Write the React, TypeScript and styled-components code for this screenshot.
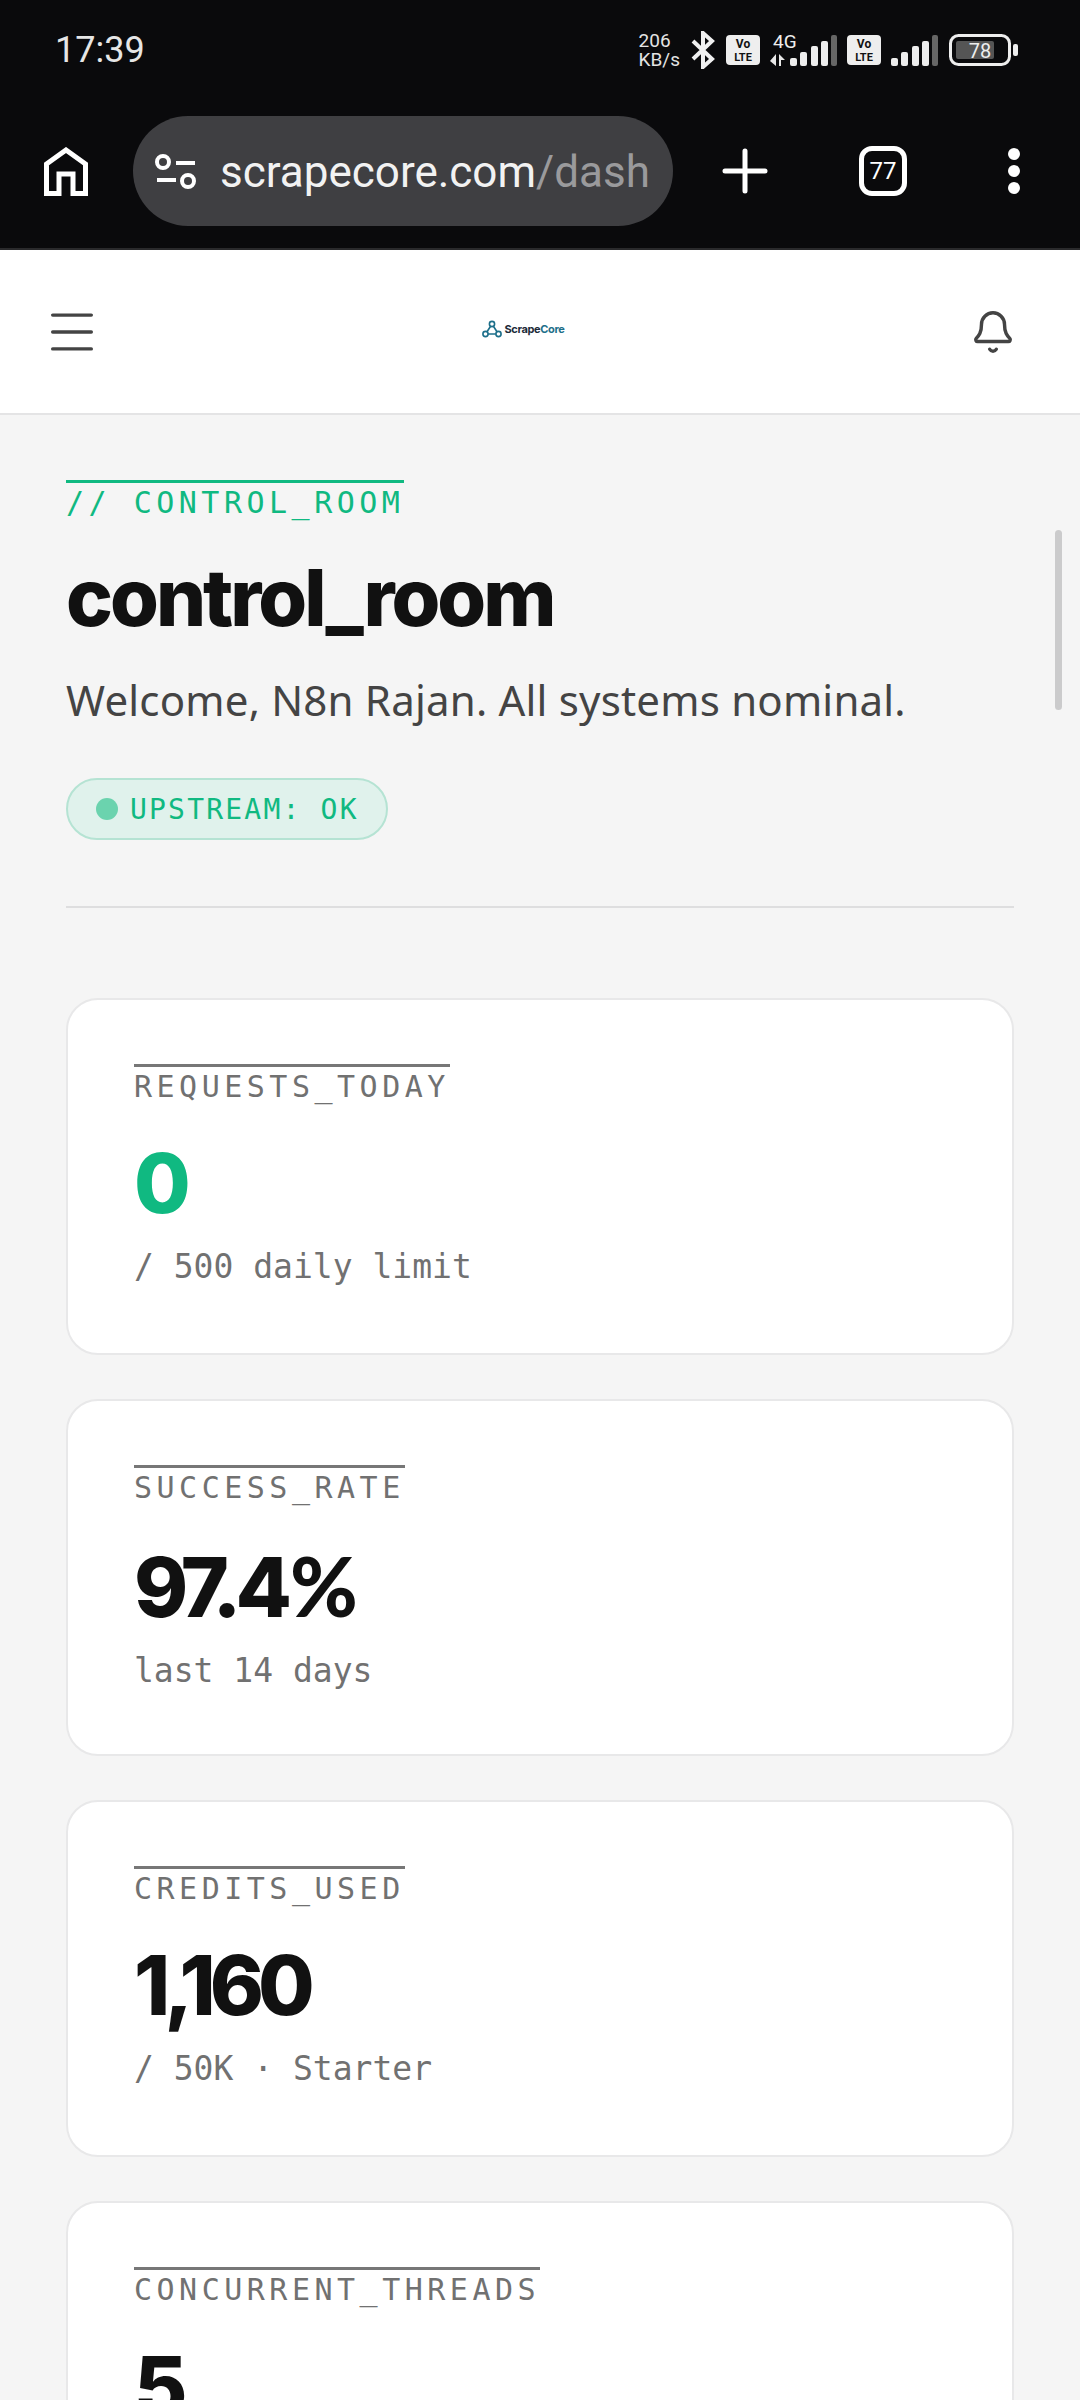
import React from "react"
import styled, { createGlobalStyle } from "styled-components"
import { Bell, Menu } from "lucide-react"

const mono = `"DejaVu Sans Mono", "Liberation Mono", monospace`
const display = `Inter, "Noto Sans", sans-serif`
const body = `"Noto Sans", Roboto, sans-serif`
const ui = `Roboto, "Noto Sans", sans-serif`

const GlobalStyle = createGlobalStyle`
    html, body {
        margin: 0;
        padding: 0;
        height: 2400px;
        overflow: hidden;
        background: #f5f5f5;
    }
    * {
        box-sizing: border-box;
    }
`

const Page = styled.div`
    position: relative;
    width: 1080px;
    height: 2400px;
    overflow: hidden;
    background: #f5f5f5;
`

const Chrome = styled.div`
    height: 250px;
    background: #0a0a0c;
    border-bottom: 2px solid #2a2a2c;
    padding: 0 40px;
    display: flex;
    flex-direction: column;
`

const StatusBar = styled.div`
    height: 100px;
    display: flex;
    align-items: center;
    justify-content: space-between;
    color: #eee;
    font-family: ${ui};
`

const Clock = styled.div`
    font-size: 36px;
    margin-left: 15px;
    color: #e6e6e6;
`

const StatusIcons = styled.div`
    display: flex;
    align-items: center;
    gap: 10px;
    margin-right: 21px;
`

const Speed = styled.div`
    font-size: 19px;
    line-height: 19px;
    text-align: left;
    color: #e4e4e4;
`

const UrlRow = styled.div`
    height: 110px;
    margin-top: 16px;
    padding-left: 4px;
    display: flex;
    align-items: center;
`

const UrlBar = styled.div`
    width: 540px;
    height: 110px;
    margin-left: 45px;
    border-radius: 55px;
    background: #3f3f42;
    display: flex;
    align-items: center;
    padding-left: 22px;
    gap: 23px;
    font-family: ${ui};
    font-size: 44px;
    color: #f2f2f2;
    white-space: nowrap;
    span {
        color: #9a9a9c;
    }
`

const UrlText = styled.div`
    margin-top: 2px;
`

const ChromeActions = styled.div`
    display: flex;
    align-items: center;
    margin-left: 49px;
    gap: 91px;
`

const TabCount = styled.div`
    width: 48px;
    height: 50px;
    border: 5px solid #fff;
    border-radius: 13px;
    color: #fff;
    font-family: ${ui};
    font-size: 24px;
    display: flex;
    align-items: center;
    justify-content: center;
`

const Header = styled.header`
    height: 165px;
    background: #fff;
    border-bottom: 2px solid #e4e4e5;
    padding: 0 64px 0 43px;
    display: flex;
    align-items: center;
    justify-content: space-between;
    color: #444;
`

const Logo = styled.div`
    display: flex;
    align-items: center;
    gap: 2px;
    margin: -6px 0 0 -24px;
    font-family: ${display};
    font-weight: 700;
    font-size: 11px;
    letter-spacing: -0.35px;
    color: #1c2b39;
    span {
        color: #1d6f8a;
    }
`

const Content = styled.main`
    padding: 65px 66px 0;
`

const Eyebrow = styled.div`
    display: inline-block;
    border-top: 3px solid #10b981;
    font-family: ${mono};
    font-size: 30px;
    line-height: 40px;
    letter-spacing: 4.5px;
    color: #10b981;
    white-space: nowrap;
`

const Title = styled.h1`
    margin: 26px 0 0;
    font-family: ${display};
    font-weight: 800;
    font-size: 79px;
    line-height: 96px;
    letter-spacing: -3px;
    color: #111;
`

const Welcome = styled.p`
    margin: 29px 0 0;
    font-family: ${body};
    font-size: 42px;
    line-height: 52px;
    letter-spacing: 0.2px;
    color: #444;
`

const Pill = styled.div`
    width: 322px;
    height: 62px;
    margin-top: 52px;
    border: 2px solid #b5e3d3;
    border-radius: 31px;
    background: #e0f2ec;
    padding-left: 28px;
    display: flex;
    align-items: center;
    gap: 12px;
    font-family: ${mono};
    font-size: 28px;
    letter-spacing: 2.2px;
    color: #10b981;
    white-space: nowrap;
`

const Dot = styled.i`
    width: 22px;
    height: 22px;
    border-radius: 50%;
    background: #6bd3ae;
`

const Divider = styled.hr`
    margin: 66px 0 0;
    border: 0;
    height: 2px;
    background: #dededf;
`

const Cards = styled.div`
    margin-top: 90px;
    display: flex;
    flex-direction: column;
    gap: 44px;
`

const Card = styled.section`
    height: 357px;
    background: #fff;
    border: 2px solid #e8e8e9;
    border-radius: 32px;
    padding: 64px 66px 0;
`

const Label = styled.div`
    display: inline-block;
    border-top: 3px solid #777;
    font-family: ${mono};
    font-size: 30px;
    line-height: 40px;
    letter-spacing: 4.5px;
    color: #717171;
    white-space: nowrap;
`

const Value = styled.div<{ $accent?: boolean }>`
    margin-top: 29px;
    font-family: ${display};
    font-weight: 800;
    font-size: 82px;
    line-height: 96px;
    letter-spacing: -6px;
    color: ${(p) => (p.$accent ? "#10b981" : "#111")};
`

const Unit = styled.span`
    margin-left: 4px;
    font-family: Lato, sans-serif;
    font-weight: 900;
    letter-spacing: 0;
`

const Sub = styled.div`
    margin-top: 13px;
    font-family: ${mono};
    font-size: 33px;
    line-height: 44px;
    color: #717171;
    white-space: nowrap;
`

const ScrollThumb = styled.div`
    position: absolute;
    left: 1055px;
    top: 530px;
    width: 7px;
    height: 180px;
    border-radius: 4px;
    background: #cbcbcc;
`

const HomeIcon = () => (
    <svg width="44" height="49" viewBox="0 0 44 49" fill="none" stroke="#fff" strokeWidth="5">
        <path d="M2.5 46.5V17L22 3l19.5 14v29.500H29V27H15v19.500z" />
    </svg>
)

const SiteControls = () => (
    <svg width="42" height="35" viewBox="0 0 42 35" fill="none" stroke="#fff" strokeWidth="4">
        <circle cx="8" cy="8" r="6" />
        <path d="M21 9h19M2 26h19" />
        <circle cx="33" cy="27" r="6" />
    </svg>
)

const PlusIcon = () => (
    <svg width="46" height="46" viewBox="0 0 46 46" stroke="#fff" strokeWidth="5" strokeLinecap="round">
        <path d="M23 3v40M3 23h40" />
    </svg>
)

const MoreIcon = () => (
    <svg width="32" height="46" viewBox="-9 0 32 46" fill="#fff">
        <circle cx="7" cy="6" r="6" />
        <circle cx="7" cy="23" r="6" />
        <circle cx="7" cy="40" r="6" />
    </svg>
)

const BluetoothIcon = () => (
    <svg width="26" height="38" viewBox="0 0 26 38" fill="none" stroke="#f0f0f0" strokeWidth="4">
        <path d="M3 10l19 18-9 8V2l9 8L3 28" />
    </svg>
)

const VoLte = () => (
    <svg width="34" height="30" viewBox="0 0 34 30">
        <rect width="34" height="30" rx="4" fill="#eee" />
        <text x="17" y="13" textAnchor="middle" fontFamily="Roboto" fontWeight="700" fontSize="12" fill="#111">Vo</text>
        <text x="17" y="26" textAnchor="middle" fontFamily="Roboto" fontWeight="700" fontSize="11" fill="#111">LTE</text>
    </svg>
)

const Signal = ({ arrows }: { arrows?: boolean }) => (
    <svg width={arrows ? 67 : 48} height="40" viewBox={`0 0 ${arrows ? 67 : 48} 40`}>
        {arrows && (
            <>
                <text x="3" y="18" fontFamily="Roboto" fontSize="19" fill="#eee">4G</text>
                <path d="M6 24v12L0 31zM9 24l6 6H11v6H9z" fill="#e8e8e8" />
            </>
        )}
        <g transform={`translate(${arrows ? 20 : 0} 5)`}>
            <rect x="0" y="23" width="7" height="8" rx="2" fill="#eee" />
            <rect x="10" y="17" width="7" height="14" rx="2" fill="#eee" />
            <rect x="21" y="11" width="7" height="20" rx="2" fill="#eee" />
            <rect x="31" y="6" width="7" height="25" rx="2" fill="#eee" />
            <rect x="41" y="0" width="6" height="31" rx="2" fill="#666" />
        </g>
    </svg>
)

const Battery = () => (
    <svg width="70" height="32" viewBox="0 0 70 32">
        <rect x="1.5" y="1.5" width="59" height="29" rx="8" fill="none" stroke="#eee" strokeWidth="3" />
        <rect x="7" y="7" width="38" height="18" rx="2" fill="#555" />
        <rect x="64" y="10" width="5" height="12" rx="2" fill="#eee" />
        <text x="31" y="24" textAnchor="middle" fontFamily="Roboto" fontSize="20" fill="#eee">78</text>
    </svg>
)

const LogoMark = () => (
    <svg width="20" height="18" viewBox="0 0 20 18" fill="none" stroke="#1d6f8a" strokeWidth="1.6">
        <circle cx="10" cy="4" r="2.6" />
        <circle cx="3.5" cy="14" r="2.6" />
        <circle cx="16.500" cy="14" r="2.6" />
        <path d="M8.6 6.2L5 11.8M11.4 6.2l3.6 5.6M6.2 14h7.6" />
    </svg>
)

const stats = [
    { label: "REQUESTS_TODAY", value: "0", sub: "/ 500 daily limit", accent: true },
    { label: "SUCCESS_RATE", value: "97.4", unit: "%", sub: "last 14 days" },
    { label: "CREDITS_USED", value: "1,160", sub: "/ 50K · Starter" },
    { label: "CONCURRENT_THREADS", value: "5", sub: "" }
]

const App: React.FC = () => {
    return (
        <Page>
            <GlobalStyle />
            <Chrome>
                <StatusBar>
                    <Clock>17:39</Clock>
                    <StatusIcons>
                        <Speed>
                            206
                            <br />
                            KB/s
                        </Speed>
                        <BluetoothIcon />
                        <VoLte />
                        <Signal arrows />
                        <VoLte />
                        <Signal />
                        <Battery />
                    </StatusIcons>
                </StatusBar>
                <UrlRow>
                    <HomeIcon />
                    <UrlBar>
                        <SiteControls />
                        <UrlText>
                            scrapecore.com<span>/dash</span>
                        </UrlText>
                    </UrlBar>
                    <ChromeActions>
                        <PlusIcon />
                        <TabCount>77</TabCount>
                        <MoreIcon />
                    </ChromeActions>
                </UrlRow>
            </Chrome>
            <Header>
                <Menu size={58} strokeWidth={1.4} />
                <Logo>
                    <LogoMark />
                    <div>
                        Scrape<span>Core</span>
                    </div>
                </Logo>
                <Bell size={46} strokeWidth={1.8} />
            </Header>
            <Content>
                <Eyebrow>// CONTROL_ROOM</Eyebrow>
                <Title>control_room</Title>
                <Welcome>Welcome, N8n Rajan. All systems nominal.</Welcome>
                <Pill>
                    <Dot />
                    UPSTREAM: OK
                </Pill>
                <Divider />
                <Cards>
                    {stats.map((s) => (
                        <Card key={s.label}>
                            <Label>{s.label}</Label>
                            <Value $accent={s.accent}>
                                {s.value}
                                {s.unit && <Unit>{s.unit}</Unit>}
                            </Value>
                            <Sub>{s.sub}</Sub>
                        </Card>
                    ))}
                </Cards>
            </Content>
            <ScrollThumb />
        </Page>
    )
}

export default App
